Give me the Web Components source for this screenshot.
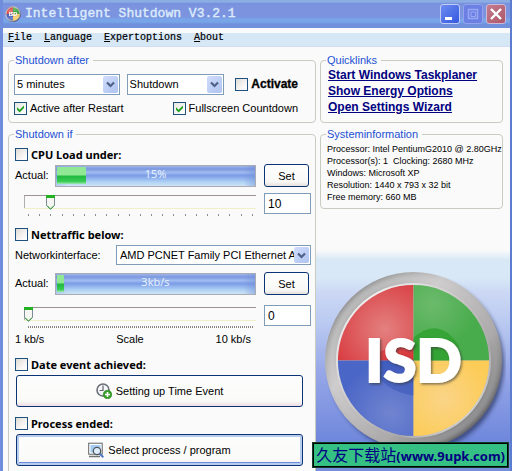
<!DOCTYPE html>
<html lang="en">
<head>
<meta charset="utf-8">
<title>Intelligent Shutdown V3.2.1</title>
<style>
html, body { height: 100%; }
body { margin: 0; overflow: hidden; background: #fafafa; color: #000; font: 11px/13px "Liberation Sans", Arial, sans-serif; }
</style>
</head>
<body>
<isd-window></isd-window>
<script>
function define(name, css, html, setup) {
  const template = document.createElement('template');
  template.innerHTML = `<style>*{box-sizing:border-box}${css}</style>${html}`;
  customElements.define(name, class extends HTMLElement {
    connectedCallback() {
      if (this.shadowRoot) return;
      const root = this.attachShadow({ mode: 'open' });
      root.append(template.content.cloneNode(true));
      if (setup) setup(this, root);
    }
  });
}
const svgUrl = s => `url("data:image/svg+xml,${encodeURIComponent(s)}")`;
const tick = svgUrl('<svg xmlns="http://www.w3.org/2000/svg" viewBox="0 0 11 11"><path d="M2 4.2 4.6 6.8 9 2.4V5L4.6 9.4 2 6.8z" fill="#21a121"/></svg>');
const thumb = svgUrl('<svg xmlns="http://www.w3.org/2000/svg" viewBox="0 0 9 15"><path d="M.5 1.5V10.500L4.500 14.500 8.500 10.500V1.500z" fill="#f6f6f2" stroke="#7c8c94"/><path d="M0 1.500H9" stroke="#21b121" stroke-width="3"/><path d="M1 10.500 4.500 14 8 10.500" fill="none" stroke="#2fa52f"/></svg>');

define('isd-logo', ':host{display:block}svg{display:block;width:100%;height:100%}',
`<svg viewBox="0 0 184 184" aria-hidden="true">
<defs>
<linearGradient id="rim" x1="0" y1="0" x2="1" y2="1"><stop offset="0" stop-color="#868686"/><stop offset=".14" stop-color="#8f8f8f"/><stop offset=".35" stop-color="#c9c7c7"/><stop offset=".65" stop-color="#a9a7a7"/><stop offset=".86" stop-color="#5d5d60"/><stop offset="1" stop-color="#4c4c50"/></linearGradient>
<linearGradient id="rim2" x1="0" y1="0" x2="1" y2="1"><stop offset="0" stop-color="#fff"/><stop offset=".3" stop-color="#dcdada"/><stop offset=".7" stop-color="#aaa8a8"/><stop offset="1" stop-color="#f4f4f4"/></linearGradient>
<radialGradient id="r" cx=".62" cy=".58" r=".75"><stop offset="0" stop-color="#e48080"/><stop offset="1" stop-color="#d83c40"/></radialGradient>
<radialGradient id="g" cx=".25" cy=".25" r=".6"><stop offset="0" stop-color="#6cba6c"/><stop offset="1" stop-color="#48ac4c"/></radialGradient>
<radialGradient id="b" cx=".7" cy=".7" r=".7"><stop offset="0" stop-color="#7084d0"/><stop offset="1" stop-color="#4a66c6"/></radialGradient>
<radialGradient id="y" cx=".4" cy=".5" r=".6"><stop offset="0" stop-color="#fad488"/><stop offset="1" stop-color="#fccc58"/></radialGradient>
<filter id="soft" x="-20%" y="-20%" width="140%" height="140%"><feGaussianBlur stdDeviation="2"/></filter>
<filter id="drop" x="-10%" y="-10%" width="130%" height="130%"><feDropShadow dx="1.500" dy="1.500" stdDeviation="1" flood-color="#333" flood-opacity=".6"/></filter>
</defs>
<circle cx="94" cy="95" r="88" fill="#26305c" opacity=".7" filter="url(#soft)"/>
<circle cx="91" cy="91" r="89" fill="url(#rim)"/>
<circle cx="91" cy="91" r="82" fill="none" stroke="url(#rim2)" stroke-width="9" opacity=".4" filter="url(#soft)"/>
<circle cx="91" cy="91" r="78" fill="url(#rim2)"/>
<path d="M91 91V15A76 76 0 0 0 15 91z" fill="url(#r)"/>
<path d="M91 91V15A76 76 0 0 1 167 91z" fill="url(#g)"/>
<path d="M91 91H15A76 76 0 0 0 91 167z" fill="url(#b)"/>
<path d="M91 91H167A76 76 0 0 1 91 167z" fill="url(#y)"/>
<path d="M91 91V68Q116 46 136 75V91z" fill="#2ca02c" opacity=".75"/>
<path d="M48 91Q60 76 91 72V91z" fill="#d42226" opacity=".5"/>
<path d="M46 91H91V126Q58 122 46 91z" fill="#3450b4" opacity=".45"/>
<text x="91" y="113" text-anchor="middle" font-family="Lato, sans-serif" font-weight="900" font-size="60" fill="#fff" stroke="#fff" stroke-width="2" filter="url(#drop)">ISD</text>
</svg>`);

define('title-bar', `
:host{display:flex;align-items:center;height:28px;padding:0 4px 0 2px;color:#dcecfc;background:linear-gradient(#8cace4 0 2px,#708cdc 4px,#7c94e0 5px 17px,#78a4e8 19px 22px,#7090dc 24px)}
isd-logo{width:16px;height:16px;margin-right:4px}
h1{flex:1;margin:0;font:13px/16px "Liberation Mono",monospace;-webkit-text-stroke:.4px #dcecfc;white-space:nowrap}
div{display:flex;gap:3px}
button{width:20px;height:20px;padding:0;border:1px solid #c0ccf4;border-radius:3px;background:linear-gradient(135deg,#6c8cf0,#3458e0);color:#fff}
button.max{background:#6c80e4;border-color:#94a4ec;color:#98a8f4}
button.close{background:linear-gradient(135deg,#c47c90,#ac5868);border-color:#d0b8d8}
svg{display:block;width:18px;height:18px;fill:none;stroke:currentColor;stroke-width:3}`,
`<isd-logo></isd-logo><h1><slot></slot></h1><div>
<button aria-label="Minimize"><svg viewBox="0 0 18 18"><path d="M4 13.500H11"/></svg></button>
<button class="max" aria-label="Maximize" disabled><svg viewBox="0 0 18 18"><path stroke-width="1.500" d="M4.500 4.500H13.500V13.500H4.500z"/><path stroke-width="1" d="M7 7H11.500V11.500H7z"/></svg></button>
<button class="close" aria-label="Close"><svg viewBox="0 0 18 18"><path stroke-width="2.400" d="M4 4 14 14M14 4 4 14"/></svg></button></div>`);

define('menu-bar', `
:host{display:block;padding-top:5px;background:#fafafa}
nav{display:flex;align-items:flex-start;gap:12px;height:14px;padding-left:5px;background:#d6e8f6;border-bottom:1px solid #d0dcf4}
button{padding:0;border:0;background:none;color:#000;font:10px/10px "Liberation Mono",monospace;-webkit-text-stroke:.2px #000}`,
`<nav><button><u>F</u>ile</button><button><u>L</u>anguage</button><button><u>E</u>xpertoptions</button><button><u>A</u>bout</button></nav>`);

define('group-box', `
:host{display:block;min-width:0}
fieldset{height:100%;min-width:0;margin:0;padding:0;border:1px solid #c8ccc0;border-radius:4px}
legend{margin-left:5px;padding:0 4px 0 1px;color:#1c50d4;font-size:11px;line-height:13px}`,
`<fieldset><legend></legend><slot></slot></fieldset>`,
(host, root) => { root.querySelector('legend').textContent = host.getAttribute('label'); });

define('check-option', `
:host{display:block}
label{display:flex;align-items:center;gap:3px;height:13px;white-space:nowrap}
:host([strong]) label{font:bold 11px/13px "Noto Sans",sans-serif}
:host([heavy]) label{font:bold 12px/13px "Liberation Sans",sans-serif;-webkit-text-stroke:.3px #000}
input{appearance:none;flex:none;width:13px;height:13px;margin:0;border:1px solid #1c5180;background:linear-gradient(135deg,#dcdcd4,#f8f4f4 60%,#fff)}
input:checked{background:${tick} center/11px 11px no-repeat,linear-gradient(135deg,#e8e8e0,#fff)}`,
`<label><input type="checkbox"><slot></slot></label>`,
(host, root) => { root.querySelector('input').checked = host.hasAttribute('checked'); });

define('combo-box', `
:host{display:grid;min-width:0;height:21px;border:1px solid #7f9db9;background:#fff}
select,span{grid-area:1/1;min-width:0}
select{appearance:none;width:100%;border:0;outline:0;padding:0 16px 0 2px;background:none;color:#000;font:11px/17px "Liberation Sans",sans-serif}
:host([wide]) select{padding-left:3px}
span{justify-self:end;display:grid;place-items:center;width:15px;margin:1px;border-radius:2px;background:linear-gradient(135deg,#d0dcfc,#b0c4f0);pointer-events:none}
svg{width:9px;height:7px}`,
`<select></select><span><svg viewBox="0 0 9 7"><path d="M1 1.500 4.500 5 8 1.500" fill="none" stroke="#4d6185" stroke-width="2.200"/></svg></span>`,
(host, root) => { const s = root.querySelector('select'); s.add(new Option(host.getAttribute('value'))); s.setAttribute('aria-label', host.getAttribute('label')); });

define('meter-bar', `
:host{display:block;height:22px;border:1px solid #a8acb4}
div{height:100%;display:grid;place-items:center;color:#e4f0fc;font:11px/14px "Noto Sans",sans-serif;background:linear-gradient(90deg,#7490d440,transparent 6% 94%,#7090d880),linear-gradient(#a0b4e8 0,#7c98e0 15%,#a0bcf0 32%,#7c9ce8 48%,#90b0ec 60%,#acd0f4 78%,#d0e4f4)}
i{grid-area:1/1;justify-self:start;width:var(--fill);height:100%;border:solid transparent;border-width:1px 0 2px 1px;background:linear-gradient(#90e894 0 48%,#20b840 52%,#38cc54 85%,#a0e8b4) padding-box}
b{grid-area:1/1;z-index:1;font-weight:400;align-self:start;margin-top:1px}`,
`<div role="progressbar"><i></i><b><slot></slot></b></div>`,
(host, root) => { host.style.setProperty('--fill', host.getAttribute('fill')); root.querySelector('div').setAttribute('aria-label', host.getAttribute('label')); });

define('level-slider', `
:host{display:block;min-width:0}
input{appearance:none;display:block;width:100%;height:15px;margin:0;outline:0;background:linear-gradient(#9c9498,#9c9498) 0 0/100% 1px no-repeat,linear-gradient(#f0f0c8,#f0f0c8) 0 13px/100% 1px no-repeat,linear-gradient(#b0acb0,#b0acb0) 0 0/1px 13px no-repeat}
input::-webkit-slider-thumb{appearance:none;width:9px;height:15px;border:0;background:${thumb} center/9px 15px no-repeat}
div{display:flex;justify-content:space-between;height:2px;margin:4px 3px 0 4px}
i{width:1px;background:#8c8c8c}
:host([fine]) div{background:repeating-linear-gradient(90deg,#8c8880 0 1px,transparent 1px 2px)}`,
`<input type="range"><div></div>`,
(host, root) => {
  const r = root.querySelector('input');
  r.max = host.getAttribute('max'); r.value = host.getAttribute('value');
  r.setAttribute('aria-label', host.getAttribute('label'));
  if (!host.hasAttribute('fine')) root.querySelector('div').innerHTML = '<i></i>'.repeat(21);
});

define('number-field', `
:host{display:block;min-width:0}
input{display:block;width:100%;height:21px;padding:0 3px;border:1px solid #7f9db9;border-radius:0;outline:0;background:#fff;font:12px/17px "Liberation Sans",sans-serif;color:#000}`,
`<input type="text">`,
(host, root) => { const i = root.querySelector('input'); i.value = host.getAttribute('value'); i.setAttribute('aria-label', host.getAttribute('label')); });

define('push-button', `
:host{display:block}
button{display:flex;align-items:center;justify-content:center;gap:4px;width:100%;height:23px;padding:0;border:1px solid #0c3474;border-radius:3px;background:linear-gradient(#fff,#f8f8f6 80%,#e4e0dc);color:#000;font:11px/14px "Liberation Sans",sans-serif}
:host([compact]) button{width:45px}
:host([large]) button{height:32px;background:linear-gradient(#fdfdfd,#fafaf8 84%,#ecdce4)}
:host([focused]) button{box-shadow:inset 0 0 0 2px #b8ccf0,inset 0 -3px #6c8cdc}`,
`<button><slot name="icon"></slot><slot></slot></button>`);

define('clock-icon', ':host{display:block;width:16px;height:16px}svg{display:block}',
`<svg width="16" height="16" viewBox="0 0 16 16"><circle cx="7" cy="7" r="6" fill="#f4f6fa" stroke="#6c7078" stroke-width="1.600"/><path d="M7 2.500V7.500H3.500" fill="none" stroke="#606468" stroke-width="1.200"/><circle cx="11.500" cy="11.500" r="4.300" fill="#38a028" stroke="#287c1c" stroke-width=".6"/><path d="M11.500 9V14M9 11.500H14" stroke="#fff" stroke-width="1.600"/></svg>`);
define('search-icon', ':host{display:block;width:16px;height:16px}svg{display:block}',
`<svg width="16" height="16" viewBox="0 0 16 16"><rect x=".7" y="1.200" width="13.500" height="11" fill="#fff" stroke="#606468"/><rect x="2.500" y="3" width="10" height="7.500" fill="#a4ccf0"/><path d="M1 14.500H12" stroke="#707478" stroke-width="1.500"/><path d="M11.800 11.800 15.300 15.300" stroke="#4c78c8" stroke-width="2"/><circle cx="9" cy="9" r="3.700" fill="#dcecfa" stroke="#505860" stroke-width="1.300"/></svg>`);

define('after-panel', `
:host{display:block}
div{display:flex;flex-direction:column;gap:7px;padding:7px 17px 7px 5px}
p{display:flex;align-items:center;margin:0;white-space:nowrap}
.a{flex:105}.b{flex:97;margin:0 11px 0 7px}
.last{justify-content:space-between}`,
`<group-box label="Shutdown after"><div>
<p><combo-box class="a" label="Delay" value="5 minutes"></combo-box><combo-box class="b" label="Action" value="Shutdown"></combo-box><check-option heavy>Activate</check-option></p>
<p class="last"><check-option checked>Active after Restart</check-option><check-option checked>Fullscreen Countdown</check-option></p>
</div></group-box>`);

define('if-panel', `
:host{display:block}
group-box{height:100%}
section{display:flex;flex-direction:column;padding:0 4px 0 6px;margin-bottom:12px}
section:first-of-type{padding-top:7px}
.event{margin-bottom:10px;gap:4px}
.event push-button{margin:0 8px 0 1px}
.row{display:grid;grid-template-columns:40px minmax(0,1fr) 47px;align-items:center;margin-top:3px}
meter-bar{margin-right:8px}
.slide{display:grid;grid-template-columns:minmax(0,1fr) 47px;gap:8px;margin:6px 0 0 9px}
level-slider{padding-top:2px}
.net{display:grid;grid-template-columns:101px minmax(0,1fr);align-items:center;margin-top:4px}
.net combo-box{height:20px}
.near{margin-top:7px}.far{margin-top:10px}
.scale{display:flex;justify-content:space-between;margin:5px 60px 0 0}`,
`<group-box label="Shutdown if">
<section><check-option strong>CPU Load under:</check-option>
<div class="row"><span>Actual:</span><meter-bar label="CPU load" fill="15%">15%</meter-bar><push-button compact>Set</push-button></div>
<div class="slide"><level-slider label="CPU threshold" max="100" value="10"></level-slider><number-field label="CPU threshold" value="10"></number-field></div></section>
<section><check-option strong>Nettraffic below:</check-option>
<div class="net"><span>Networkinterface:</span><combo-box wide label="Networkinterface" value="AMD PCNET Family PCI Ethernet Adapter"></combo-box></div>
<div class="row near"><span>Actual:</span><meter-bar label="Net traffic" fill="4%">3kb/s</meter-bar><push-button compact>Set</push-button></div>
<div class="slide far"><level-slider fine label="Traffic threshold" max="100" value="0"></level-slider><number-field label="Traffic threshold" value="0"></number-field></div>
<div class="scale"><span>1 kb/s</span><span>Scale</span><span>10 kb/s</span></div></section>
<section class="event"><check-option strong>Date event achieved:</check-option><push-button large><clock-icon slot="icon"></clock-icon>Setting up Time Event</push-button></section>
<section class="event"><check-option strong>Process ended:</check-option><push-button large focused><search-icon slot="icon"></search-icon>Select process / program</push-button></section>
</group-box>`);

define('quick-links', `
ul{margin:0;padding:0 0 7px 7px;list-style:none;font:bold 12px/16px "Liberation Sans",sans-serif;white-space:nowrap}
a{color:#000080}`,
`<group-box label="Quicklinks"><ul><li><a href="#tasks">Start Windows Taskplaner</a></li><li><a href="#energy">Show Energy Options</a></li><li><a href="#settings">Open Settings Wizard</a></li></ul></group-box>`);

define('system-info', `
p{margin:0;padding:2px 0 5px 6px;font-size:9px;line-height:12px;white-space:pre;overflow:hidden}`,
`<group-box label="Systeminformation"><p>Processor: Intel PentiumG2010 @ 2.80GHz
Processor(s): 1  Clocking: 2680 MHz
Windows: Microsoft XP
Resolution: 1440 x 793 x 32 bit
Free memory: 660 MB</p></group-box>`);

define('site-badge', `
:host{display:block;padding:0 2px;border:1px solid #000;outline:1px solid #103c28;background:#36c184;color:#000080;font:16px/20px "Noto Sans CJK SC",sans-serif;white-space:nowrap}
b{font:bold 13px/20px "Noto Sans",sans-serif}`,
`久友下载站<b>(www.9upk.com)</b>`);

define('isd-window', `
:host{position:relative;display:flex;flex-direction:column;height:100vh;overflow:hidden;border-right:2px solid #5c7cd0;border-left:3px solid #708cdc;background:#fafafa}
main{flex:1;min-height:0;display:grid;grid-template-columns:minmax(0,313fr) minmax(0,194fr)}
.left{display:flex;flex-direction:column;gap:5px;padding:7px 0 0 5px;min-height:0}
if-panel{flex:1}
.right{display:flex;flex-direction:column;min-height:0}
aside{display:flex;flex-direction:column;gap:5px;padding:7px 7px 0 4px}
quick-links,system-info{display:block}
figure{flex:1;margin:41px 0 0;padding:20px 4px 0 7px;background:linear-gradient(#fafafa,#d8e8f6 10px 28px,#ccd8f4 42px,#b8c8f0 75px,#98a8e8 120px,#7088dc 190px,#7890dc)}
figure isd-logo{width:100%;aspect-ratio:1}
site-badge{position:absolute;right:2px;bottom:4px}`,
`<title-bar>Intelligent Shutdown V3.2.1</title-bar><menu-bar></menu-bar>
<main><div class="left"><after-panel></after-panel><if-panel></if-panel></div>
<div class="right"><aside><quick-links></quick-links><system-info></system-info></aside><figure><isd-logo></isd-logo></figure></div></main>
<site-badge></site-badge>`);
</script>
</body>
</html>
